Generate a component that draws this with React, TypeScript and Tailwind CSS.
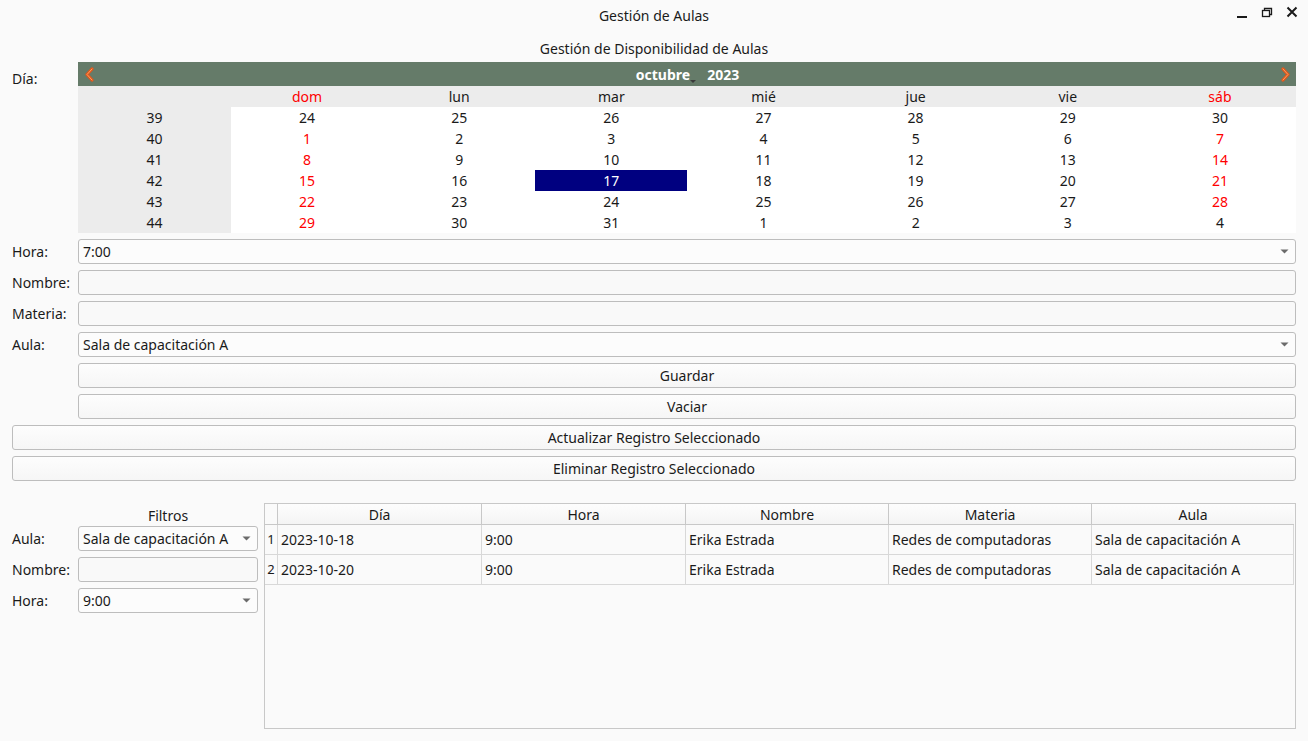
import React from "react";

const font = { fontFamily: '"Noto Sans", "Open Sans", sans-serif' };

const weeks = [
  { n: 39, days: [24, 25, 26, 27, 28, 29, 30], from: 7, to: 7 },
  { n: 40, days: [1, 2, 3, 4, 5, 6, 7], from: 0, to: 6 },
  { n: 41, days: [8, 9, 10, 11, 12, 13, 14], from: 0, to: 6 },
  { n: 42, days: [15, 16, 17, 18, 19, 20, 21], from: 0, to: 6 },
  { n: 43, days: [22, 23, 24, 25, 26, 27, 28], from: 0, to: 6 },
  { n: 44, days: [29, 30, 31, 1, 2, 3, 4], from: 0, to: 2 },
];

const dayNames = ["dom", "lun", "mar", "mié", "jue", "vie", "sáb"];

const rows = [
  ["2023-10-18", "9:00", "Erika Estrada", "Redes de computadoras", "Sala de capacitación A"],
  ["2023-10-20", "9:00", "Erika Estrada", "Redes de computadoras", "Sala de capacitación A"],
];

function Arrow() {
  return (
    <svg width="9" height="5" viewBox="0 0 9 5" className="shrink-0">
      <path d="M0.5 0.5 L8.5 0.5 L4.5 4.5 Z" fill="#6b6b6b" />
    </svg>
  );
}

function Combo({ value, className = "" }: { value: string; className?: string }) {
  return (
    <div
      className={`flex h-[25px] items-center justify-between rounded-[3px] border border-[#bdbdbd] bg-[#fcfcfc] pl-[4px] pr-[6px] text-[14px] text-[#1a1a1a] ${className}`}>
      <span>{value}</span>
      <Arrow />
    </div>
  );
}

function Field({ className = "" }: { className?: string }) {
  return (
    <div className={`h-[25px] rounded-[3px] border border-[#bdbdbd] bg-[#f9f9f9] ${className}`}></div>
  );
}

function Button({ label }: { label: string }) {
  return (
    <div className="flex h-[25px] items-center justify-center rounded-[3px] border border-[#bdbdbd] bg-gradient-to-b from-[#fdfdfd] to-[#f6f6f6] text-[14px] text-[#1a1a1a]">
      {label}
    </div>
  );
}

function Chevron({ dir }: { dir: "l" | "r" }) {
  const d = dir === "l" ? "M8 2 L3 7.5 L8 13" : "M3 2 L8 7.5 L3 13";
  return (
    <svg width="11" height="15" viewBox="0 0 11 15">
      <path d={d} fill="none" stroke="#e2561a" strokeWidth="3.2" strokeLinecap="round" strokeLinejoin="round" />
      <path d={d} fill="none" stroke="#f8a466" strokeWidth="1" strokeLinecap="round" strokeLinejoin="round" />
    </svg>
  );
}

function Calendar() {
  return (
    <div className="flex-1">
      <div className="flex h-[24px] items-center justify-between bg-[#657b69] pl-[6px] pr-[5px]">
        <Chevron dir="l" />
        <div className="flex items-center gap-[17px] text-[14px] font-bold text-white">
          <span className="relative">
            octubre
            <span className="absolute -right-[6px] bottom-[2px] h-0 w-0 border-x-[3px] border-t-[3px] border-x-transparent border-t-[#3a3a3a]"></span>
          </span>
          <span>2023</span>
        </div>
        <Chevron dir="r" />
      </div>
      <div className="grid grid-cols-[153px_repeat(7,1fr)] bg-[#ececec] text-[14px] leading-[21px]">
        <div></div>
        {dayNames.map((d, i) => (
          <div key={d} className={`text-center ${i === 0 || i === 6 ? "text-[#ff0000]" : "text-[#1a1a1a]"}`}>
            {d}
          </div>
        ))}
      </div>
      {weeks.map((w, wi) => (
        <div key={w.n} className="grid grid-cols-[153px_repeat(7,1fr)] text-[14px] leading-[21px]">
          <div className="bg-[#ececec] text-center text-[#1a1a1a]">{w.n}</div>
          {w.days.map((d, i) => {
            const selected = wi === 3 && i === 2;
            const inMonth = i >= w.from && i <= w.to;
            const weekend = (i === 0 || i === 6) && inMonth;
            return (
              <div
                key={i}
                className={`text-center ${selected ? "bg-[#000080] text-white" : weekend ? "bg-white text-[#ff0000]" : "bg-white text-[#1a1a1a]"}`}>
                {d}
              </div>
            );
          })}
        </div>
      ))}
    </div>
  );
}

export default function App() {
  return (
    <div className="flex h-[741px] w-[1308px] flex-col bg-[#fafafa] text-[14px] text-[#1a1a1a]" style={font}>
      {/* title bar */}
      <div className="relative flex h-[30px] items-center justify-center">
        <span className="text-[14px]">Gestión de Aulas</span>
        <div className="absolute right-[10px] top-[6px] flex items-center gap-[13px]">
          <svg width="12" height="12" viewBox="0 0 12 12">
            <rect x="1" y="10" width="10" height="2" fill="#1a1a1a" />
          </svg>
          <svg width="12" height="12" viewBox="0 0 12 12">
            <rect x="1.5" y="4.5" width="7" height="6" fill="none" stroke="#1a1a1a" strokeWidth="1.3" />
            <path d="M3.5 4.5 V2.5 H10.5 V8.5 H8.5" fill="none" stroke="#1a1a1a" strokeWidth="1.3" />
          </svg>
          <svg width="12" height="12" viewBox="0 0 12 12">
            <path d="M1.5 1.5 L10.5 10.5 M10.5 1.5 L1.5 10.5" stroke="#1a1a1a" strokeWidth="2" />
          </svg>
        </div>
      </div>

      <div className="flex flex-1 flex-col px-[12px]">
        <div className="flex h-[32px] items-center justify-center pt-[4px]">Gestión de Disponibilidad de Aulas</div>

        <div className="flex">
          <div className="w-[66px] pt-[6px]">Día:</div>
          <Calendar />
        </div>

        <div className="mt-[6px] flex flex-col gap-[6px]">
          <div className="flex items-center">
            <div className="w-[66px]">Hora:</div>
            <Combo value="7:00" className="flex-1" />
          </div>
          <div className="flex items-center">
            <div className="w-[66px]">Nombre:</div>
            <Field className="flex-1" />
          </div>
          <div className="flex items-center">
            <div className="w-[66px]">Materia:</div>
            <Field className="flex-1" />
          </div>
          <div className="flex items-center">
            <div className="w-[66px]">Aula:</div>
            <Combo value="Sala de capacitación A" className="flex-1" />
          </div>
          <div className="ml-[66px]">
            <Button label="Guardar" />
          </div>
          <div className="ml-[66px]">
            <Button label="Vaciar" />
          </div>
          <Button label="Actualizar Registro Seleccionado" />
          <Button label="Eliminar Registro Seleccionado" />
        </div>

        <div className="mt-[22px] flex gap-[6px]">
          <div className="flex w-[246px] flex-col">
            <div className="ml-[66px] flex h-[23px] items-end justify-center">Filtros</div>
            <div className="flex flex-col gap-[6px]">
              <div className="flex items-center">
                <div className="w-[66px]">Aula:</div>
                <Combo value="Sala de capacitación A" className="flex-1" />
              </div>
              <div className="flex items-center">
                <div className="w-[66px]">Nombre:</div>
                <Field className="flex-1" />
              </div>
              <div className="flex items-center">
                <div className="w-[66px]">Hora:</div>
                <Combo value="9:00" className="flex-1" />
              </div>
            </div>
          </div>

          <div className="h-[226px] flex-1 border border-[#c8c8c8] bg-[#fafafa]">
            <div className="grid grid-cols-[12px_204px_204px_203px_203px_203px] text-[14px]">
              <div className="h-[21px] border-b border-[#c8c8c8]"></div>
              {["Día", "Hora", "Nombre", "Materia", "Aula"].map((h) => (
                <div
                  key={h}
                  className="flex h-[21px] items-center justify-center border-b border-l border-[#c8c8c8] bg-gradient-to-b from-[#fdfdfd] to-[#f4f4f4]">
                  {h}
                </div>
              ))}
              {rows.map((r, ri) => (
                <React.Fragment key={ri}>
                  <div className="flex h-[30px] items-center justify-center border-b border-[#d8d8d8] text-[13px]">{ri + 1}</div>
                  {r.map((c, ci) => (
                    <div
                      key={ci}
                      className={`flex h-[30px] items-center border-b border-l border-[#d8d8d8] pl-[3px] ${ci === 4 ? "border-r" : ""}`}>
                      {c}
                    </div>
                  ))}
                </React.Fragment>
              ))}
            </div>
          </div>
        </div>
      </div>
    </div>
  );
}
